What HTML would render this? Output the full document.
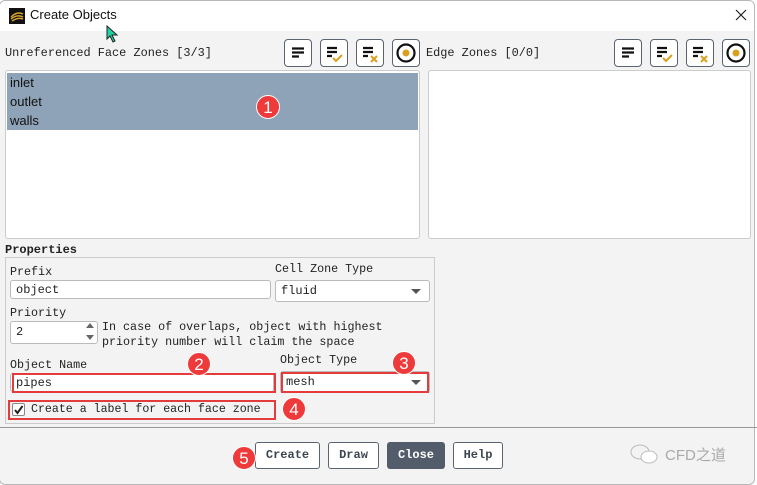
<!DOCTYPE html>
<html><head><meta charset="utf-8"><style>
*{box-sizing:border-box;margin:0;padding:0}
body{width:757px;height:485px;background:#fff;position:relative;overflow:hidden;font-family:"Liberation Mono",monospace;font-size:11.7px;color:#222}
.win{position:absolute;left:0;top:0;width:756px;height:485px;border:1px solid #b8b8b8;border-radius:6px;background:#f3f3f3;overflow:hidden}
.title{position:absolute;left:0;top:0;width:100%;height:30px;background:#fff}
.abs{position:absolute}
.list{position:absolute;background:#fff;border:1px solid #ccc;border-radius:3px}
.row{height:19px;line-height:19px;padding-left:3px;font-family:"Liberation Sans",sans-serif;font-size:13px;color:#111;background:#8ea3b7}
.ib{position:absolute;width:28px;height:28px;border:1px solid #5a6470;border-radius:4px;background:#fff}
.inp{position:absolute;background:#fff;border:1px solid #bbb;border-radius:3px;padding-left:5px;line-height:18px;font-size:12px}
.btn{position:absolute;top:442px;height:27px;border:1px solid #5a6470;border-radius:3px;background:#fff;font-weight:bold;font-size:12px;line-height:25px;text-align:center;color:#3c4550;font-family:"Liberation Mono",monospace}
.red{position:absolute;border:2px solid #e53b3b}
.badge{position:absolute;width:24px;height:24px;border-radius:50%;background:#ee3a3a;color:#fff;font-family:"Liberation Sans",sans-serif;font-size:17px;line-height:24px;text-align:center;border:1px solid #fff}
.arr{position:absolute;width:0;height:0;border-left:5px solid transparent;border-right:5px solid transparent;border-top:5px solid #555}
</style></head><body>
<div class="win" style="left:-1px">
<div class="title"></div>
</div>
<svg class="abs" style="left:9px;top:8px" width="16" height="16"><rect width="16" height="16" fill="#111"/><path d="M2 9 Q8 3 14 6 M2 11 Q8 6 14 9 M3 13 Q9 9 14 11" stroke="#d6a22a" stroke-width="1.5" fill="none"/></svg>
<div class="abs" style="left:30px;top:7px;font-family:'Liberation Sans',sans-serif;font-size:13px;color:#111">Create Objects</div>
<svg class="abs" style="left:106px;top:25px" width="14" height="18"><path d="M1 1 L1 14 L4 11 L7 17 L9 16 L6 10 L11 10 Z" fill="#1fd4a2" stroke="#222" stroke-width="1"/></svg>
<svg class="abs" style="left:735px;top:9px" width="12" height="12"><path d="M1 1 L11 11 M11 1 L1 11" stroke="#222" stroke-width="1.2"/></svg>

<div class="abs" style="left:5px;top:46px;font-size:11.9px">Unreferenced Face Zones [3/3]</div>
<div class="abs" style="left:426px;top:46px;font-size:11.9px">Edge Zones [0/0]</div>

<div class="ib" style="left:284px;top:39px"><svg width="26" height="26"><path d="M7 8.5h12M7 12.5h12M7 16.5h7" stroke="#111" stroke-width="2.2"/></svg></div>
<div class="ib" style="left:320px;top:39px"><svg width="26" height="26"><path d="M6 8h10M6 12h10M6 16h5" stroke="#111" stroke-width="2.2"/><path d="M12 18l3 3 6-6" stroke="#d9a020" stroke-width="2" fill="none"/></svg></div>
<div class="ib" style="left:356px;top:39px"><svg width="26" height="26"><path d="M6 8h10M6 12h10M6 16h5" stroke="#111" stroke-width="2.2"/><path d="M14 16l6 6M20 16l-6 6" stroke="#d9a020" stroke-width="2"/></svg></div>
<div class="ib" style="left:392px;top:39px"><svg width="26" height="26"><circle cx="13" cy="13" r="8.5" stroke="#111" stroke-width="2.2" fill="none"/><circle cx="13" cy="13" r="3.5" fill="#d9a020"/></svg></div>

<div class="ib" style="left:614px;top:39px"><svg width="26" height="26"><path d="M7 8.5h12M7 12.5h12M7 16.5h7" stroke="#111" stroke-width="2.2"/></svg></div>
<div class="ib" style="left:650px;top:39px"><svg width="26" height="26"><path d="M6 8h10M6 12h10M6 16h5" stroke="#111" stroke-width="2.2"/><path d="M12 18l3 3 6-6" stroke="#d9a020" stroke-width="2" fill="none"/></svg></div>
<div class="ib" style="left:686px;top:39px"><svg width="26" height="26"><path d="M6 8h10M6 12h10M6 16h5" stroke="#111" stroke-width="2.2"/><path d="M14 16l6 6M20 16l-6 6" stroke="#d9a020" stroke-width="2"/></svg></div>
<div class="ib" style="left:722px;top:39px"><svg width="26" height="26"><circle cx="13" cy="13" r="8.5" stroke="#111" stroke-width="2.2" fill="none"/><circle cx="13" cy="13" r="3.5" fill="#d9a020"/></svg></div>

<div class="list" style="left:5px;top:70px;width:415px;height:169px;padding:2px 1px">
<div class="row">inlet</div><div class="row">outlet</div><div class="row">walls</div>
</div>
<div class="list" style="left:428px;top:70px;width:323px;height:169px"></div>
<div class="badge" style="left:256px;top:95px">1</div>

<div class="abs" style="left:5px;top:243px;font-weight:bold;font-family:'Liberation Mono',monospace;font-size:12px">Properties</div>
<div class="abs" style="left:5px;top:257px;width:430px;height:167px;border:1px solid #ccc"></div>
<div class="abs" style="left:0;top:427px;width:757px;height:1px;background:#999"></div>

<div class="abs" style="left:10px;top:265px">Prefix</div>
<div class="inp" style="left:10px;top:280px;width:261px;height:19px">object</div>
<div class="abs" style="left:275px;top:262px">Cell Zone Type</div>
<div class="inp" style="left:275px;top:280px;width:155px;height:22px;line-height:20px">fluid</div>
<div class="arr" style="left:411px;top:289px"></div>

<div class="abs" style="left:10px;top:306px">Priority</div>
<div class="inp" style="left:10px;top:321px;width:88px;height:23px;line-height:21px">2</div>
<div class="abs" style="left:86px;top:323px;width:0;height:0;border-left:4px solid transparent;border-right:4px solid transparent;border-bottom:5px solid #666"></div>
<div class="abs" style="left:86px;top:335px;width:0;height:0;border-left:4px solid transparent;border-right:4px solid transparent;border-top:5px solid #666"></div>
<div class="abs" style="left:102px;top:320px;line-height:15px">In case of overlaps, object with highest<br>priority number will claim the space</div>

<div class="abs" style="left:10px;top:358px">Object Name</div>
<div class="inp" style="left:10px;top:373px;width:264px;height:19px">pipes</div>
<div class="red" style="left:12px;top:373px;width:264px;height:20px"></div>
<div class="abs" style="left:280px;top:353px">Object Type</div>
<div class="inp" style="left:280px;top:371px;width:150px;height:22px;line-height:20px">mesh</div>
<div class="red" style="left:281px;top:372px;width:148px;height:21px"></div>
<div class="arr" style="left:411px;top:380px"></div>

<div class="abs" style="left:12px;top:403px;width:13px;height:13px;border:1px solid #888;background:#fff;border-radius:2px"><svg width="11" height="11" style="position:absolute;left:0;top:0"><path d="M2 6l2.5 3L9.5 2" stroke="#222" stroke-width="2" fill="none"/></svg></div>
<div class="abs" style="left:31px;top:403px;font-size:11.6px">Create a label for each face zone</div>
<div class="red" style="left:8px;top:400px;width:268px;height:20px"></div>

<div class="badge" style="left:187px;top:352px">2</div>
<div class="badge" style="left:392px;top:351px">3</div>
<div class="badge" style="left:282px;top:397px">4</div>

<div class="btn" style="left:255px;width:65px">Create</div>
<div class="btn" style="left:328px;width:51px">Draw</div>
<div class="btn" style="left:387px;width:58px;background:#525c6a;color:#fff;border-color:#525c6a">Close</div>
<div class="btn" style="left:453px;width:50px">Help</div>
<div class="badge" style="left:232px;top:446px">5</div>

<svg class="abs" style="left:629px;top:442px" width="32" height="24"><ellipse cx="11" cy="10" rx="9" ry="7" fill="none" stroke="#bbb"/><ellipse cx="20" cy="15" rx="8" ry="6" fill="#fff" stroke="#bbb"/></svg>
<div class="abs" style="left:665px;top:444px;font-family:'Liberation Sans','Noto Sans CJK SC',sans-serif;font-size:15px;color:#aaa">CFD之道</div>
</body></html>
